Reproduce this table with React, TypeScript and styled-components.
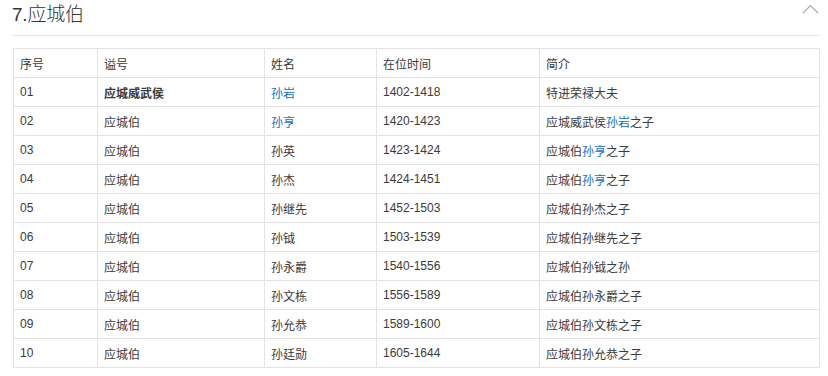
import styled, { createGlobalStyle } from 'styled-components';

const GlobalStyle = createGlobalStyle`
  body {
    margin: 0;
    background: #fff;
    font-family: "Liberation Sans", "Noto Sans CJK SC", sans-serif;
    color: #333;
  }
`;

const Section = styled.section`
  width: 808px;
  padding: 0 8px 0 12px;
`;

const Header = styled.div`
  display: flex;
  align-items: center;
  justify-content: space-between;
  height: 35px;
  border-bottom: 1px solid #e8e8e8;
`;

const Title = styled.h2`
  margin: 0 0 6px;
  font-size: 19px;
  font-weight: 300;
  letter-spacing: -0.2px;
  line-height: 28px;
  color: #333;
  font-family: "Liberation Sans", "Noto Sans CJK SC", sans-serif;
`;

const Toggle = styled.svg`
  width: 17px;
  height: 10px;
  margin: 0 1px 17px 0;
`;

const Table = styled.table`
  margin: 12px 0 0 1px;
  width: 807px;
  border-collapse: collapse;
  table-layout: fixed;
  font-size: 12px;
`;

const Cell = styled.td<{ $bold?: boolean }>`
  height: 28px;
  padding: 0 6px;
  border: 1px solid #e3e3e3;
  text-align: left;
  vertical-align: middle;
  font-weight: ${(p) => (p.$bold ? 'bold' : 'normal')};
  color: #3a3a3a;
  white-space: nowrap;
`;

const HeadCell = styled(Cell).attrs({ as: 'th' })``;

const Link = styled.a`
  color: #136ec2;
  text-decoration: none;
`;

type Part = string | { link: string };

interface Row {
  no: string;
  title: string;
  name: Part;
  years: string;
  intro: Part[];
  bold?: boolean;
}

const rows: Row[] = [
  { no: '01', title: '应城威武侯', name: { link: '孙岩' }, years: '1402-1418', intro: ['特进荣禄大夫'], bold: true },
  { no: '02', title: '应城伯', name: { link: '孙亨' }, years: '1420-1423', intro: ['应城威武侯', { link: '孙岩' }, '之子'] },
  { no: '03', title: '应城伯', name: '孙英', years: '1423-1424', intro: ['应城伯', { link: '孙亨' }, '之子'] },
  { no: '04', title: '应城伯', name: '孙杰', years: '1424-1451', intro: ['应城伯', { link: '孙亨' }, '之子'] },
  { no: '05', title: '应城伯', name: '孙继先', years: '1452-1503', intro: ['应城伯孙杰之子'] },
  { no: '06', title: '应城伯', name: '孙钺', years: '1503-1539', intro: ['应城伯孙继先之子'] },
  { no: '07', title: '应城伯', name: '孙永爵', years: '1540-1556', intro: ['应城伯孙钺之孙'] },
  { no: '08', title: '应城伯', name: '孙文栋', years: '1556-1589', intro: ['应城伯孙永爵之子'] },
  { no: '09', title: '应城伯', name: '孙允恭', years: '1589-1600', intro: ['应城伯孙文栋之子'] },
  { no: '10', title: '应城伯', name: '孙廷勋', years: '1605-1644', intro: ['应城伯孙允恭之子'] },
];

const renderPart = (p: Part, i: number) =>
  typeof p === 'string' ? <span key={i}>{p}</span> : <Link key={i} href="#">{p.link}</Link>;

export default function App() {
  return (
    <>
      <GlobalStyle />
      <Section>
        <Header>
          <Title>7.应城伯</Title>
          <Toggle viewBox="0 0 17 10">
            <polyline points="1,9 8.5,1.5 16,9" fill="none" stroke="#aaa" strokeWidth="1.2" />
          </Toggle>
        </Header>
        <Table>
          <colgroup>
            <col style={{ width: 84 }} />
            <col style={{ width: 167 }} />
            <col style={{ width: 112 }} />
            <col style={{ width: 163 }} />
            <col />
          </colgroup>
          <thead>
            <tr>
              <HeadCell>序号</HeadCell>
              <HeadCell>谥号</HeadCell>
              <HeadCell>姓名</HeadCell>
              <HeadCell>在位时间</HeadCell>
              <HeadCell>简介</HeadCell>
            </tr>
          </thead>
          <tbody>
            {rows.map((r) => (
              <tr key={r.no}>
                <Cell>{r.no}</Cell>
                <Cell $bold={r.bold}>{r.title}</Cell>
                <Cell>{renderPart(r.name, 0)}</Cell>
                <Cell>{r.years}</Cell>
                <Cell>{r.intro.map(renderPart)}</Cell>
              </tr>
            ))}
          </tbody>
        </Table>
      </Section>
    </>
  );
}
